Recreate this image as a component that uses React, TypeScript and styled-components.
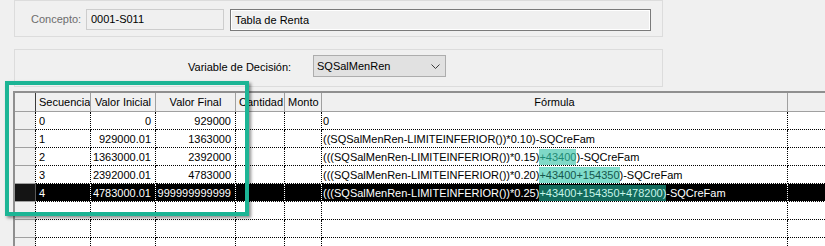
import React, { FC } from "react";
import styled, { createGlobalStyle } from "styled-components";

const GlobalStyle = createGlobalStyle`
  html, body {
    margin: 0;
    padding: 0;
    background: #f0f0f0;
  }
  body {
    font-family: "Liberation Sans", Arial, sans-serif;
    font-size: 11px;
    color: #000;
  }
`;

interface FormulaRow {
  seq: string;
  ini: string;
  fin: string;
  pre: string;
  mark?: string;
  post?: string;
  selected?: boolean;
}

const rows: FormulaRow[] = [
  { seq: "0", ini: "0", fin: "929000", pre: "0" },
  {
    seq: "1",
    ini: "929000.01",
    fin: "1363000",
    pre: "((SQSalMenRen-LIMITEINFERIOR())*0.10)-SQCreFam",
  },
  {
    seq: "2",
    ini: "1363000.01",
    fin: "2392000",
    pre: "(((SQSalMenRen-LIMITEINFERIOR())*0.15)",
    mark: "+43400",
    post: ")-SQCreFam",
  },
  {
    seq: "3",
    ini: "2392000.01",
    fin: "4783000",
    pre: "(((SQSalMenRen-LIMITEINFERIOR())*0.20)",
    mark: "+43400+154350",
    post: ")-SQCreFam",
  },
  {
    seq: "4",
    ini: "4783000.01",
    fin: "999999999999",
    pre: "(((SQSalMenRen-LIMITEINFERIOR())*0.25)",
    mark: "+43400+154350+478200)",
    post: "-SQCreFam",
    selected: true,
  },
];

const EMPTY_ROWS = 3;

const App: FC = () => {
  return (
    <Page>
      <GlobalStyle />
      <GroupBox $height={37}>
        <FieldLabel $muted>Concepto:</FieldLabel>
        <CodeInput>0001-S011</CodeInput>
        <NameInput>Tabla de Renta</NameInput>
      </GroupBox>

      <GroupBox $height={38} $top={12}>
        <DecisionLabel>Variable de Decisión:</DecisionLabel>
        <Select>
          <span>SQSalMenRen</span>
          <svg width="9" height="5" viewBox="0 0 9 5">
            <polyline
              points="0.5,0.5 4.5,4.5 8.5,0.5"
              fill="none"
              stroke="#3c3c3c"
              strokeWidth="1"
            />
          </svg>
        </Select>
      </GroupBox>

      <Grid>
        <HeaderCell $corner />
        <HeaderCell $align="flex-start">Secuencia</HeaderCell>
        <HeaderCell>Valor Inicial</HeaderCell>
        <HeaderCell>Valor Final</HeaderCell>
        <HeaderCell $align="flex-start">Cantidad</HeaderCell>
        <HeaderCell $align="flex-start">Monto</HeaderCell>
        <HeaderCell>Fórmula</HeaderCell>
        <HeaderCell />

        {rows.map((r) => (
          <React.Fragment key={r.seq}>
            <RowHead $selected={r.selected} />
            <Cell $selected={r.selected}>{r.seq}</Cell>
            <Cell $selected={r.selected} $align="flex-end">
              {r.ini}
            </Cell>
            <Cell $selected={r.selected} $align="flex-end">
              {r.fin}
            </Cell>
            <Cell $selected={r.selected} />
            <Cell $selected={r.selected} />
            <Cell $selected={r.selected} $formula>
              {r.pre}
              {r.mark && (
                <Mark $tone={r.selected ? "dark" : r.seq === "3" ? "mid" : "light"}>
                  {r.mark}
                </Mark>
              )}
              {r.post}
            </Cell>
            <Cell $selected={r.selected} />
          </React.Fragment>
        ))}

        {Array.from({ length: EMPTY_ROWS }).map((_, i) => (
          <React.Fragment key={"e" + i}>
            <RowHead />
            <Cell />
            <Cell />
            <Cell />
            <Cell />
            <Cell />
            <Cell />
            <Cell />
          </React.Fragment>
        ))}
      </Grid>

      <Callout />
    </Page>
  );
};

const Page = styled.div`
  position: relative;
  width: 825px;
  height: 246px;
  overflow: hidden;
  background: #f0f0f0;
`;

const GroupBox = styled.div<{ $height: number; $top?: number }>`
  box-sizing: border-box;
  display: flex;
  align-items: flex-start;
  width: 649px;
  height: ${(p) => p.$height}px;
  margin: ${(p) => p.$top || 0}px 0 0 14px;
  border: 1px solid #dcdcdc;
  padding: 8px 0 0 16px;
`;

const FieldLabel = styled.div<{ $muted?: boolean }>`
  width: 55px;
  height: 21px;
  line-height: 21px;
  color: ${(p) => (p.$muted ? "#6d6d6d" : "#000")};
`;

const CodeInput = styled.div`
  box-sizing: border-box;
  width: 138px;
  height: 21px;
  line-height: 19px;
  padding-left: 4px;
  border: 1px solid #cdcdcd;
  background: #f0f0f0;
`;

const NameInput = styled.div`
  box-sizing: border-box;
  width: 421px;
  height: 22px;
  line-height: 20px;
  margin-left: 6px;
  padding-left: 4px;
  border: 1px solid #7a7a7a;
  box-shadow: inset 0 0 0 1px #fff;
  background: #f0f0f0;
`;

const DecisionLabel = styled.div`
  width: 125px;
  height: 22px;
  line-height: 24px;
  margin-left: 157px;
  margin-top: -3px;
`;

const Select = styled.div`
  box-sizing: border-box;
  display: flex;
  align-items: center;
  justify-content: space-between;
  width: 133px;
  height: 22px;
  margin-top: -3px;
  padding: 0 5px 0 3px;
  border: 1px solid #adadad;
  background: #e1e1e1;

  svg {
    margin-top: 1px;
  }
`;

const Grid = styled.div`
  display: grid;
  grid-template-columns: 21px 55px 65px 80px 49px 37px 466px 1fr;
  grid-auto-rows: 18px;
  grid-template-rows: 19px;
  width: 812px;
  margin: 4px 0 0 13px;
  border-top: 2px solid #8f8f8f;
  border-left: 2px solid #8f8f8f;
  background: #fff;
`;

const HeaderCell = styled.div<{ $align?: string; $corner?: boolean }>`
  box-sizing: border-box;
  display: flex;
  align-items: center;
  justify-content: ${(p) => p.$align || "center"};
  padding: 0 3px;
  white-space: nowrap;
  overflow: hidden;
  background: #f0f0f0;
  border-right: 1px solid ${(p) => (p.$corner ? "#3a3a3a" : "#a0a0a0")};
  border-bottom: 1px solid #a0a0a0;
`;

const RowHead = styled.div<{ $selected?: boolean }>`
  box-sizing: border-box;
  background: ${(p) => (p.$selected ? "#141414" : "#f0f0f0")};
  border-right: 1px ${(p) => (p.$selected ? "solid #5a5a5a" : "dotted #000")};
  border-bottom: 1px solid #a0a0a0;
`;

const Cell = styled.div<{
  $align?: string;
  $selected?: boolean;
  $formula?: boolean;
}>`
  box-sizing: border-box;
  display: flex;
  align-items: center;
  justify-content: ${(p) => p.$align || "flex-start"};
  padding: ${(p) => (p.$formula ? "0 0 0 1px" : "0 4px 0 3px")};
  white-space: nowrap;
  overflow: hidden;
  background: ${(p) => (p.$selected ? "#000" : "#fff")};
  color: ${(p) => (p.$selected ? "#fff" : "#000")};
  border-right: 1px dotted ${(p) => (p.$selected ? "#fff" : "#000")};
  border-bottom: 1px dotted ${(p) => (p.$selected ? "#fff" : "#000")};
  box-shadow: ${(p) => (p.$selected ? "0 1px 0 #000" : "none")};
`;

const markTones = {
  light: { bg: "#7fd9c7", fg: "#1f8a74" },
  mid: { bg: "#7fdccb", fg: "#16564b" },
  dark: { bg: "#136b5c", fg: "#c8f5ea" },
};

const Mark = styled.span<{ $tone: keyof typeof markTones }>`
  display: inline-block;
  height: 16px;
  line-height: 16px;
  background: ${(p) => markTones[p.$tone].bg};
  color: ${(p) => markTones[p.$tone].fg};
`;

const Callout = styled.div`
  position: absolute;
  left: 5px;
  top: 81px;
  width: 244px;
  height: 135px;
  box-sizing: border-box;
  border: 4px solid #1cb595;
  box-shadow: 2px 2px 3px rgba(0, 0, 0, 0.45);
  pointer-events: none;
`;

export default App;
